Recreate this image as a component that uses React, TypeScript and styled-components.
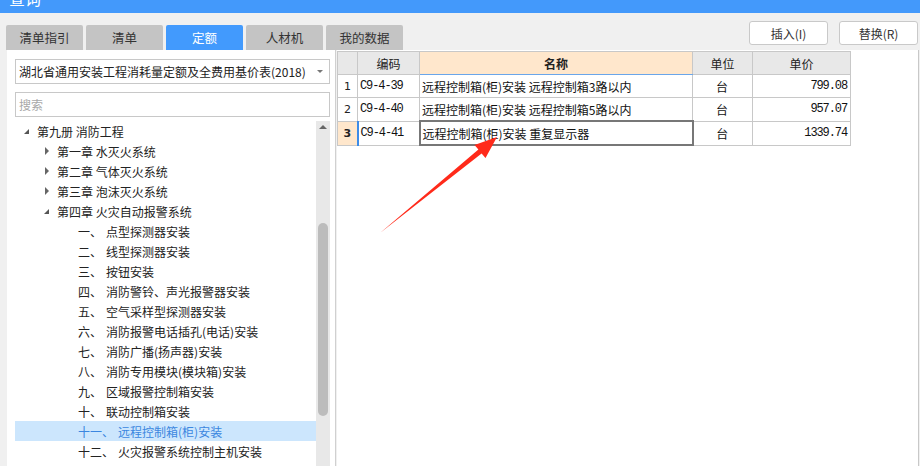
import React from 'react'
import styled, { createGlobalStyle } from 'styled-components'

const Global = createGlobalStyle`
  html, body {
    margin: 0;
    padding: 0;
    background: #f0f0f0;
    font-family: "Noto Sans CJK SC", "Noto Sans", sans-serif;
    font-size: 12px;
    color: #222;
  }
`;

const Window = styled.div`
  position: relative;
  width: 920px;
  height: 466px;
  overflow: hidden;
  background: #f0f0f0;
  display: flex;
  flex-direction: column;
`;

const TitleBar = styled.div`
  height: 13px;
  flex: none;
  background: #4399fb;
  color: #fff;
  overflow: hidden;
  display: flex;
  justify-content: space-between;
  padding: 0 6px 0 9px;
  font-size: 16px;
  line-height: 16px;

  span {
    margin-top: -10px;
  }
`;

const WinButtons = styled.span`
  display: flex;
  gap: 14px;
`;

const Toolbar = styled.div`
  height: 37px;
  flex: none;
  display: flex;
  justify-content: space-between;
  padding: 0 2px 0 6px;
`;

const Tabs = styled.div`
  display: flex;
  align-items: flex-end;
  gap: 3px;
`;

const Tab = styled.div<{ $active?: boolean }>`
  width: 77px;
  height: 25px;
  border-radius: 2px 2px 0 0;
  background: ${p => (p.$active ? '#429afd' : '#c4c4c4')};
  color: ${p => (p.$active ? '#fff' : '#333')};
  display: flex;
  align-items: center;
  justify-content: center;
  font-size: 12.5px;
`;

const Actions = styled.div`
  display: flex;
  gap: 11px;
  padding-top: 8px;
`;

const Button = styled.button`
  width: 79px;
  height: 24px;
  background: #fff;
  border: 1px solid #c9c9c9;
  border-radius: 3px;
  font-family: "Noto Sans CJK SC", "Noto Sans", sans-serif;
  font-size: 12px;
  color: #333;
  padding: 0;
`;

const Main = styled.div`
  flex: 1;
  display: flex;
  padding-left: 7px;
  min-height: 0;
`;

const LeftPanel = styled.div`
  width: 329px;
  background: #fff;
  border-right: 1px solid #d0d0d0;
  padding: 9px 5px 0 8px;
  display: flex;
  flex-direction: column;
  gap: 8px;
  box-sizing: border-box;
`;

const Select = styled.div`
  height: 25px;
  border: 1px solid #c8c8c8;
  box-sizing: border-box;
  display: flex;
  align-items: center;
  justify-content: space-between;
  padding: 0 6px 0 3px;
  color: #222;
`;

const Caret = styled.span`
  width: 0;
  height: 0;
  border-left: 3px solid transparent;
  border-right: 3px solid transparent;
  border-top: 3px solid #777;
`;

const Search = styled.div`
  height: 25px;
  border: 1px solid #c8c8c8;
  box-sizing: border-box;
  display: flex;
  align-items: center;
  padding: 0 3px;
  color: #a8a8a8;
`;

const TreeWrap = styled.div`
  flex: 1;
  display: flex;
  min-height: 0;
  margin-top: -4px;
`;

const Tree = styled.div`
  flex: 1;
  overflow: hidden;
`;

const Row = styled.div<{ $indent: number; $selected?: boolean }>`
  height: 20px;
  display: flex;
  align-items: center;
  padding-left: ${p => p.$indent}px;
  background: ${p => (p.$selected ? '#cce6fd' : 'transparent')};
  color: ${p => (p.$selected ? '#3b86e0' : '#222')};
  white-space: nowrap;
`;

const Toggle = styled.span<{ $open?: boolean }>`
  width: 15px;
  display: inline-flex;
  align-items: center;
  justify-content: flex-start;

  &::before {
    content: '';
    display: block;
    width: 0;
    height: 0;
    ${p =>
      p.$open
        ? `border-left: 5px solid transparent; border-bottom: 5px solid #555; margin-left: 2px;`
        : `border-top: 4px solid transparent; border-bottom: 4px solid transparent; border-left: 4px solid #666; margin-left: 3px;`}
  }
`;

const Num = styled.span`
  margin-right: 4px;
`;

const ScrollTrack = styled.div`
  width: 14px;
  background: #e8e8e8;
  display: flex;
  flex-direction: column;
  align-items: center;
`;

const UpArrow = styled.span`
  margin-top: 4px;
  width: 0;
  height: 0;
  border-left: 4px solid transparent;
  border-right: 4px solid transparent;
  border-bottom: 4px solid #666;
`;

const Thumb = styled.div`
  margin-top: 94px;
  width: 10px;
  height: 193px;
  border-radius: 5px;
  background: #bcbcbc;
`;

const RightPanel = styled.div`
  flex: 1;
  background: #fff;
  border-right: 1px solid #c8c8c8;
  margin-right: 1px;
  margin-left: 1px;
`;

const Table = styled.table`
  border-collapse: collapse;
  table-layout: fixed;
  margin-top: 1px;
  font-size: 12px;
`;

const Th = styled.th<{ $w: number; $hl?: boolean }>`
  width: ${p => p.$w}px;
  height: 22px;
  padding: 0;
  border: 1px solid #c8c8c8;
  background: ${p => (p.$hl ? '#ffe7cc' : '#e8e8e8')};
  font-weight: ${p => (p.$hl ? 700 : 400)};
  border-bottom: ${p => (p.$hl ? '1px solid #6aa6ea' : '1px solid #c8c8c8')};
  color: #222;
`;

const Td = styled.td<{ $align?: string; $mono?: boolean; $sel?: boolean }>`
  height: 22px;
  padding: 0 3px 0 2px;
  border: ${p => (p.$sel ? '2px solid #777' : '1px solid #c8c8c8')};
  text-align: ${p => p.$align || 'left'};
  white-space: nowrap;
  overflow: hidden;
  font-family: ${p => (p.$mono ? '"Liberation Mono", monospace' : '"Noto Sans CJK SC", sans-serif')};
  letter-spacing: ${p => (p.$mono ? '-1.1px' : '0')};
  color: #111;
`;

const RowHead = styled.td<{ $cur?: boolean }>`
  padding: 0;
  text-align: center;
  border: 1px solid #c8c8c8;
  border-right: ${p => (p.$cur ? '2px solid #3d8ce8' : '1px solid #c8c8c8')};
  background: ${p => (p.$cur ? '#ffe7cc' : '#fff')};
  font-weight: ${p => (p.$cur ? 700 : 400)};
  font-family: "DejaVu Sans", sans-serif;
  font-size: 11px;
`;

const Arrow = styled.svg`
  position: absolute;
  left: 0;
  top: 0;
  pointer-events: none;
`;

const tree: { t: string; indent: number; toggle?: 'open' | 'closed'; num?: string; sel?: boolean }[] = [
  { t: '第九册 消防工程', indent: 7, toggle: 'open' },
  { t: '第一章 水灭火系统', indent: 27, toggle: 'closed' },
  { t: '第二章 气体灭火系统', indent: 27, toggle: 'closed' },
  { t: '第三章 泡沫灭火系统', indent: 27, toggle: 'closed' },
  { t: '第四章 火灾自动报警系统', indent: 27, toggle: 'open' },
  { num: '一、', t: '点型探测器安装', indent: 63 },
  { num: '二、', t: '线型探测器安装', indent: 63 },
  { num: '三、', t: '按钮安装', indent: 63 },
  { num: '四、', t: '消防警铃、声光报警器安装', indent: 63 },
  { num: '五、', t: '空气采样型探测器安装', indent: 63 },
  { num: '六、', t: '消防报警电话插孔(电话)安装', indent: 63 },
  { num: '七、', t: '消防广播(扬声器)安装', indent: 63 },
  { num: '八、', t: '消防专用模块(模块箱)安装', indent: 63 },
  { num: '九、', t: '区域报警控制箱安装', indent: 63 },
  { num: '十、', t: '联动控制箱安装', indent: 63 },
  { num: '十一、', t: '远程控制箱(柜)安装', indent: 63, sel: true },
  { num: '十二、', t: '火灾报警系统控制主机安装', indent: 63 },
];

const rows = [
  { code: 'C9-4-39', name: '远程控制箱(柜)安装 远程控制箱3路以内', unit: '台', price: '799.08' },
  { code: 'C9-4-40', name: '远程控制箱(柜)安装 远程控制箱5路以内', unit: '台', price: '957.07' },
  { code: 'C9-4-41', name: '远程控制箱(柜)安装 重复显示器', unit: '台', price: '1339.74' },
];

export default function App() {
  return (
    <Window>
      <Global />
      <TitleBar>
        <span>查询</span>
        <WinButtons>
          <span>—</span>
          <span>×</span>
        </WinButtons>
      </TitleBar>
      <Toolbar>
        <Tabs>
          <Tab>清单指引</Tab>
          <Tab>清单</Tab>
          <Tab $active>定额</Tab>
          <Tab>人材机</Tab>
          <Tab>我的数据</Tab>
        </Tabs>
        <Actions>
          <Button>插入(I)</Button>
          <Button>替换(R)</Button>
        </Actions>
      </Toolbar>
      <Main>
        <LeftPanel>
          <Select>
            <span>湖北省通用安装工程消耗量定额及全费用基价表(2018)</span>
            <Caret />
          </Select>
          <Search>搜索</Search>
          <TreeWrap>
            <Tree>
              {tree.map((r, i) => (
                <Row key={i} $indent={r.indent} $selected={r.sel}>
                  {r.toggle && <Toggle $open={r.toggle === 'open'} />}
                  {r.num && <Num>{r.num}</Num>}
                  {r.t}
                </Row>
              ))}
            </Tree>
            <ScrollTrack>
              <UpArrow />
              <Thumb />
            </ScrollTrack>
          </TreeWrap>
        </LeftPanel>
        <RightPanel>
          <Table>
            <thead>
              <tr>
                <Th $w={19}></Th>
                <Th $w={61}>编码</Th>
                <Th $w={272} $hl>名称</Th>
                <Th $w={59}>单位</Th>
                <Th $w={97}>单价</Th>
              </tr>
            </thead>
            <tbody>
              {rows.map((r, i) => {
                const cur = i === rows.length - 1;
                return (
                  <tr key={r.code}>
                    <RowHead $cur={cur}>{i + 1}</RowHead>
                    <Td $mono>{r.code}</Td>
                    <Td $sel={cur}>{r.name}</Td>
                    <Td $align="center">{r.unit}</Td>
                    <Td $align="right" $mono>{r.price}</Td>
                  </tr>
                );
              })}
            </tbody>
          </Table>
        </RightPanel>
      </Main>
      <Arrow width="920" height="466" viewBox="0 0 920 466">
        <polygon
          points="380,233 481.6,153.5 485.5,158 497,137 474.5,145 478.4,149.5"
          fill="#ff2a1a"
        />
      </Arrow>
    </Window>
  );
}
